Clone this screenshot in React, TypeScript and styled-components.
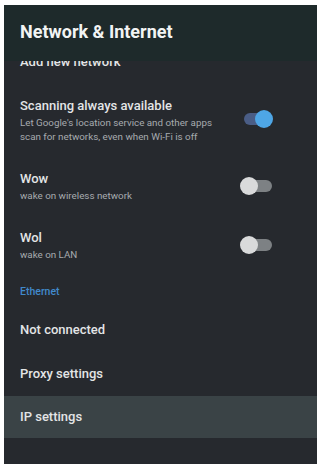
import styled, { createGlobalStyle } from 'styled-components';

const GlobalStyle = createGlobalStyle`
  html, body {
    margin: 0;
    padding: 0;
    background: #ffffff;
  }
  body {
    font-family: Roboto, "Noto Sans", "Liberation Sans", sans-serif;
  }
`;

const Screen = styled.div`
  margin: 5px 4px 0 4px;
  height: 459px;
  background: #26292e;
  display: flex;
  flex-direction: column;
  overflow: hidden;
`;

const Header = styled.div`
  height: 56px;
  flex: none;
  background: #1e2a2b;
  display: flex;
  align-items: flex-start;
  padding: 17px 0 0 16px;
  box-sizing: border-box;
  position: relative;
  z-index: 1;
`;

const Title = styled.h1`
  margin: 0;
  font-size: 18px;
  line-height: 20px;
  font-weight: 700;
  color: #f2f4f4;
`;

const List = styled.div`
  flex: 1;
  display: flex;
  flex-direction: column;
  margin-top: -23px; /* list is scrolled a little under the header */
`;

const Row = styled.div<{ $h: number; $active?: boolean }>`
  height: ${(p) => p.$h}px;
  flex: none;
  display: flex;
  align-items: center;
  justify-content: space-between;
  padding: 0 43px 0 16px;
  background: ${(p) => (p.$active ? '#3a4346' : 'transparent')};
`;

const Texts = styled.div`
  display: flex;
  flex-direction: column;
  gap: 2px;
`;

const ItemTitle = styled.div`
  font-size: 13px;
  line-height: 16px;
  font-weight: 500;
  color: #e3e5e6;
`;

const ItemSub = styled.div`
  font-size: 9.8px;
  line-height: 14px;
  color: #a7abaf;
`;

const Section = styled.div`
  font-size: 10.5px;
  font-weight: 500;
  color: #4189cc;
`;

const Toggle = styled.div<{ $on?: boolean }>`
  position: relative;
  width: 34px;
  height: 20px;
  flex: none;
  margin-top: ${(p) => (p.$on ? '-5px' : '-3px')};

  &::before {
    content: '';
    position: absolute;
    left: 4px;
    right: 2px;
    top: 4px;
    height: 12px;
    border-radius: 6px;
    background: ${(p) => (p.$on ? '#4a5d86' : '#7d8184')};
  }

  &::after {
    content: '';
    position: absolute;
    top: 1px;
    left: ${(p) => (p.$on ? '15px' : '0')};
    width: 18px;
    height: 18px;
    border-radius: 50%;
    background: ${(p) => (p.$on ? '#4ea6e6' : '#d9dadb')};
  }
`;

export default function App() {
  return (
    <>
      <GlobalStyle />
      <Screen>
        <Header>
          <Title>Network &amp; Internet</Title>
        </Header>
        <List>
          <Row $h={48}>
            <ItemTitle>Add new network</ItemTitle>
          </Row>
          <Row $h={70}>
            <Texts>
              <ItemTitle>Scanning always available</ItemTitle>
              <ItemSub>
                Let Google's location service and other apps
                <br />
                scan for networks, even when Wi-Fi is off
              </ItemSub>
            </Texts>
            <Toggle $on />
          </Row>
          <Row $h={62}>
            <Texts>
              <ItemTitle>Wow</ItemTitle>
              <ItemSub>wake on wireless network</ItemSub>
            </Texts>
            <Toggle />
          </Row>
          <Row $h={56}>
            <Texts>
              <ItemTitle>Wol</ItemTitle>
              <ItemSub>wake on LAN</ItemSub>
            </Texts>
            <Toggle />
          </Row>
          <Row $h={34}>
            <Section>Ethernet</Section>
          </Row>
          <Row $h={44}>
            <ItemTitle>Not connected</ItemTitle>
          </Row>
          <Row $h={44}>
            <ItemTitle>Proxy settings</ItemTitle>
          </Row>
          <Row $h={42} $active>
            <ItemTitle>IP settings</ItemTitle>
          </Row>
        </List>
      </Screen>
    </>
  );
}
